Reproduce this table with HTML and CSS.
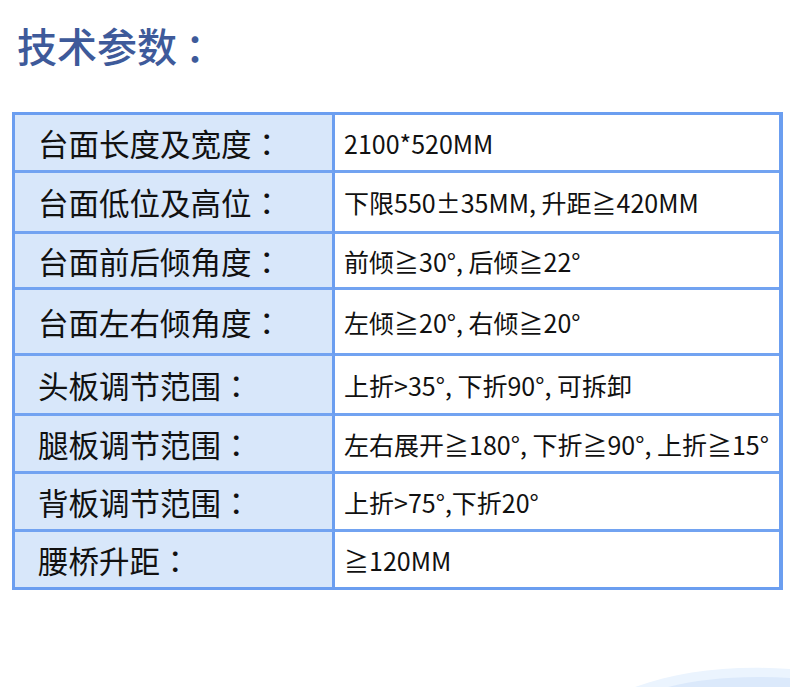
FILE: index.html
```html
<!DOCTYPE html>
<html lang="zh-CN">
<head>
<meta charset="utf-8">
<title>技术参数</title>
<link rel="stylesheet" href="styles.css">
</head>
<body>
<div class="page">
  <h1 class="title">技术参数<span class="colon title-colon">：</span></h1>
  <div class="spec">
    <div class="k">台面长度及宽度<span class="colon">：</span></div><div class="v">2100*520MM</div>
    <div class="k">台面低位及高位<span class="colon">：</span></div><div class="v">下限550±35MM, 升距≧420MM</div>
    <div class="k">台面前后倾角度<span class="colon">：</span></div><div class="v">前倾≧30°, 后倾≧22°</div>
    <div class="k">台面左右倾角度<span class="colon">：</span></div><div class="v">左倾≧20°, 右倾≧20°</div>
    <div class="k">头板调节范围<span class="colon">：</span></div><div class="v">上折&gt;35°, 下折90°, 可拆卸</div>
    <div class="k">腿板调节范围<span class="colon">：</span></div><div class="v">左右展开≧180°, 下折≧90°, 上折≧15°</div>
    <div class="k">背板调节范围<span class="colon">：</span></div><div class="v">上折&gt;75°,下折20°</div>
    <div class="k last">腰桥升距<span class="colon">：</span></div><div class="v last">≧120MM</div>
  </div>
  <svg class="deco" width="790" height="30" viewBox="0 0 790 30">
    <path d="M635 30 C 680 14, 730 8, 790 12 L790 30 Z" fill="#ebf4fe"/>
    <path d="M668 30 C 700 22, 740 18, 790 21 L790 30 Z" fill="#dbe9fb"/>
  </svg>
</div>
</body>
</html>
```
FILE: styles.css
```css
html, body {
  margin: 0;
  padding: 0;
  background: #ffffff;
}
body {
  width: 790px;
  height: 687px;
  overflow: hidden;
  font-family: "Noto Sans CJK SC", "Noto Sans", sans-serif;
}
.page {
  position: relative;
  width: 790px;
  height: 687px;
}
.title {
  margin: 0;
  padding: 21px 0 0 17px;
  height: 91px;
  box-sizing: border-box;
  font-size: 40px;
  line-height: 48px;
  font-weight: 500;
  color: #3e5a9a;
}
.colon {
  font-family: "Noto Sans CJK JP", "Noto Sans CJK SC", sans-serif;
}
.title-colon {
  margin-left: 8px;
}
.spec {
  display: grid;
  grid-template-columns: 320px 444px;
  grid-template-rows: 58px 61px 56px 66px 60px 58px 58px 55px;
  margin: 21px 0 0 12px;
  width: 771px;
  box-sizing: border-box;
  border: 3px solid #6b9ef0;
  border-right-width: 4px;
  color: #111111;
}
.k, .v {
  display: flex;
  align-items: center;
  box-sizing: border-box;
  border-bottom: 3px solid #72a3f1;
  white-space: nowrap;
}
.k {
  background: #d8e7fa;
  border-right: 3px solid #6b9ef0;
  padding-left: 23px;
  font-size: 30.5px;
}
.v {
  background: #ffffff;
  padding-left: 9px;
  font-size: 25px;
}
.last {
  border-bottom: none;
}
.deco {
  position: absolute;
  left: 0;
  bottom: 0;
  display: block;
}
```
